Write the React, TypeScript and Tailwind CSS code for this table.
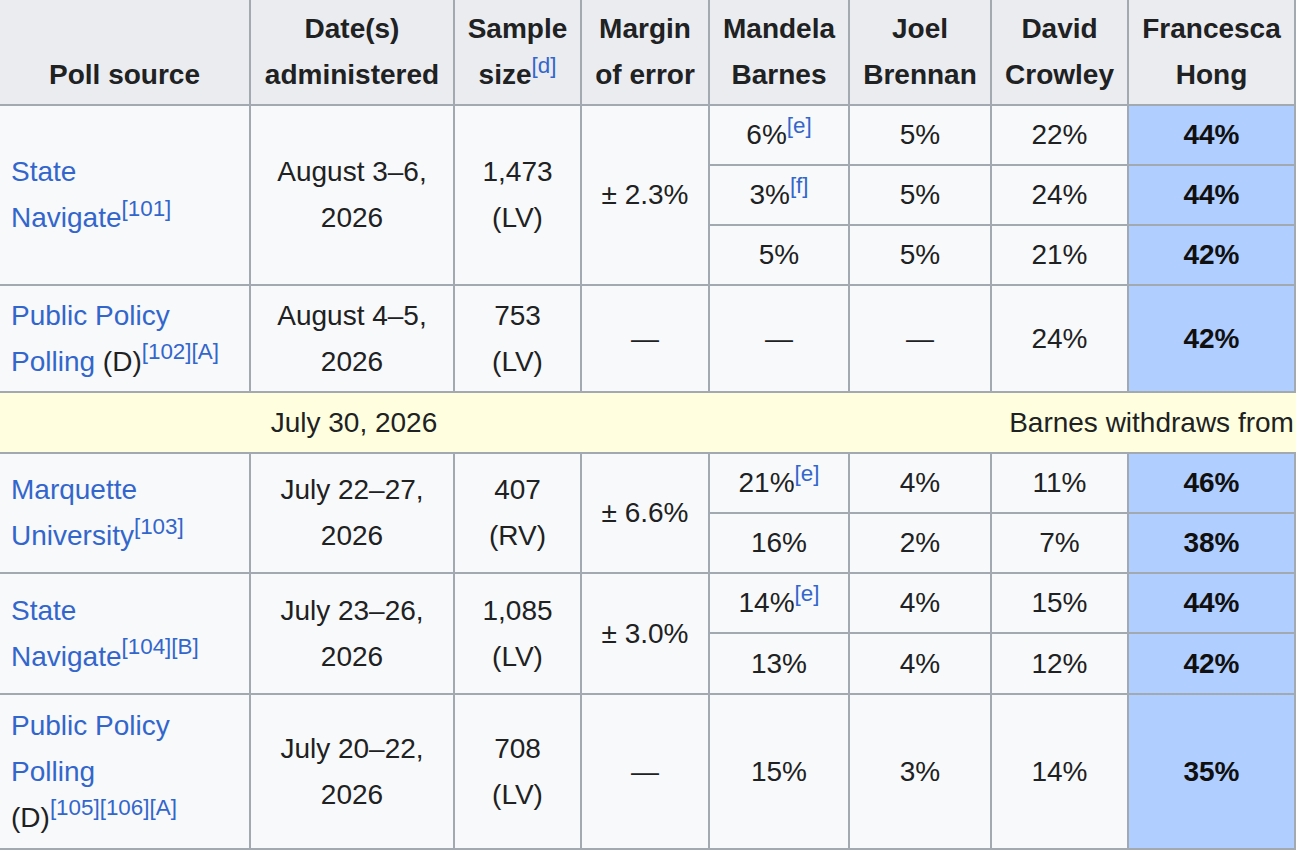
import type { ReactNode } from "react";

/**
 * Opinion polling table (Wikipedia style), cropped to the visible part of a wider table.
 */

const cell = "border-2 border-[#a2a9b1] px-[11px] py-[6px] bg-[#f8f9fa]";
const head = "border-2 border-[#a2a9b1] px-[11px] py-[6px] bg-[#eaecf0] font-bold align-bottom text-center";
const event = "border-y-2 border-[#a2a9b1] px-[11px] py-[6px] bg-[#ffffe0] text-center align-middle";

function Ref({ children }: { children: ReactNode }) {
  return <sup className="text-[80%] font-normal text-[#3366cc] whitespace-nowrap">{children}</sup>;
}

function Src({ children }: { children: ReactNode }) {
  return <span className="text-[#3366cc]">{children}</span>;
}

function Td({ children, rows }: { children?: ReactNode; rows?: number }) {
  return (
    <td rowSpan={rows} className={`${cell} text-center align-middle`}>
      {children}
    </td>
  );
}

function Lead({ children }: { children: ReactNode }) {
  return (
    <td className="border-2 border-[#a2a9b1] px-[11px] py-[6px] bg-[#b0ceff] text-center align-middle font-bold text-[#101010]">
      {children}
    </td>
  );
}

// columns past the right edge of the crop (other / undecided)
function Extra() {
  return (
    <>
      <td className={cell} />
      <td className={cell} />
    </>
  );
}

export default function App() {
  return (
    <div
      className="w-[1296px] h-[850px] overflow-hidden bg-white text-[#202122] text-[28px] leading-[46px]"
      style={{ fontFamily: '"Liberation Sans", Arial, sans-serif' }}
    >
      <table className="table-fixed border-collapse w-[1704px] -ml-[2px] -mt-[2px]">
        <colgroup>
          <col className="w-[251px]" />
          <col className="w-[204px]" />
          <col className="w-[127px]" />
          <col className="w-[128px]" />
          <col className="w-[140px]" />
          <col className="w-[142px]" />
          <col className="w-[137px]" />
          <col className="w-[167px]" />
          <col className="w-[200px]" />
          <col className="w-[208px]" />
        </colgroup>
        <thead>
          <tr className="h-[106px]">
            <th className={head}>Poll source</th>
            <th className={head}>
              Date(s)
              <br />
              administered
            </th>
            <th className={head}>
              Sample
              <br />
              size<Ref>[d]</Ref>
            </th>
            <th className={head}>
              Margin
              <br />
              of error
            </th>
            <th className={head}>
              Mandela
              <br />
              Barnes
            </th>
            <th className={head}>
              Joel
              <br />
              Brennan
            </th>
            <th className={head}>
              David
              <br />
              Crowley
            </th>
            <th className={head}>
              Francesca
              <br />
              Hong
            </th>
            <th className={head} />
            <th className={head} />
          </tr>
        </thead>
        <tbody>
          <tr className="h-[60px]">
            <td rowSpan={3} className={`${cell} text-left align-middle`}>
              <Src>State</Src>
              <br />
              <Src>Navigate</Src>
              <Ref>[101]</Ref>
            </td>
            <Td rows={3}>
              August 3–6,
              <br />
              2026
            </Td>
            <Td rows={3}>
              1,473
              <br />
              (LV)
            </Td>
            <Td rows={3}>± 2.3%</Td>
            <Td>
              6%<Ref>[e]</Ref>
            </Td>
            <Td>5%</Td>
            <Td>22%</Td>
            <Lead>44%</Lead>
            <Extra />
          </tr>
          <tr className="h-[60px]">
            <Td>
              3%<Ref>[f]</Ref>
            </Td>
            <Td>5%</Td>
            <Td>24%</Td>
            <Lead>44%</Lead>
            <Extra />
          </tr>
          <tr className="h-[60px]">
            <Td>5%</Td>
            <Td>5%</Td>
            <Td>21%</Td>
            <Lead>42%</Lead>
            <Extra />
          </tr>
          <tr className="h-[107px]">
            <td className={`${cell} text-left align-middle`}>
              <Src>Public Policy</Src>
              <br />
              <Src>Polling</Src> (D)<Ref>[102][A]</Ref>
            </td>
            <Td>
              August 4–5,
              <br />
              2026
            </Td>
            <Td>
              753
              <br />
              (LV)
            </Td>
            <Td>—</Td>
            <Td>—</Td>
            <Td>—</Td>
            <Td>24%</Td>
            <Lead>42%</Lead>
            <Extra />
          </tr>
          <tr className="h-[61px]">
            <td colSpan={4} className={event}>
              July 30, 2026
            </td>
            <td colSpan={6} className={event}>
              Barnes withdraws from the race
            </td>
          </tr>
          <tr className="h-[60px]">
            <td rowSpan={2} className={`${cell} text-left align-middle`}>
              <Src>Marquette</Src>
              <br />
              <Src>University</Src>
              <Ref>[103]</Ref>
            </td>
            <Td rows={2}>
              July 22–27,
              <br />
              2026
            </Td>
            <Td rows={2}>
              407
              <br />
              (RV)
            </Td>
            <Td rows={2}>± 6.6%</Td>
            <Td>
              21%<Ref>[e]</Ref>
            </Td>
            <Td>4%</Td>
            <Td>11%</Td>
            <Lead>46%</Lead>
            <Extra />
          </tr>
          <tr className="h-[60px]">
            <Td>16%</Td>
            <Td>2%</Td>
            <Td>7%</Td>
            <Lead>38%</Lead>
            <Extra />
          </tr>
          <tr className="h-[60px]">
            <td rowSpan={2} className={`${cell} text-left align-middle`}>
              <Src>State</Src>
              <br />
              <Src>Navigate</Src>
              <Ref>[104][B]</Ref>
            </td>
            <Td rows={2}>
              July 23–26,
              <br />
              2026
            </Td>
            <Td rows={2}>
              1,085
              <br />
              (LV)
            </Td>
            <Td rows={2}>± 3.0%</Td>
            <Td>
              14%<Ref>[e]</Ref>
            </Td>
            <Td>4%</Td>
            <Td>15%</Td>
            <Lead>44%</Lead>
            <Extra />
          </tr>
          <tr className="h-[61px]">
            <Td>13%</Td>
            <Td>4%</Td>
            <Td>12%</Td>
            <Lead>42%</Lead>
            <Extra />
          </tr>
          <tr className="h-[155px]">
            <td className={`${cell} text-left align-middle`}>
              <Src>Public Policy</Src>
              <br />
              <Src>Polling</Src>
              <br />
              (D)<Ref>[105][106][A]</Ref>
            </td>
            <Td>
              July 20–22,
              <br />
              2026
            </Td>
            <Td>
              708
              <br />
              (LV)
            </Td>
            <Td>—</Td>
            <Td>15%</Td>
            <Td>3%</Td>
            <Td>14%</Td>
            <Lead>35%</Lead>
            <Extra />
          </tr>
        </tbody>
      </table>
    </div>
  );
}
